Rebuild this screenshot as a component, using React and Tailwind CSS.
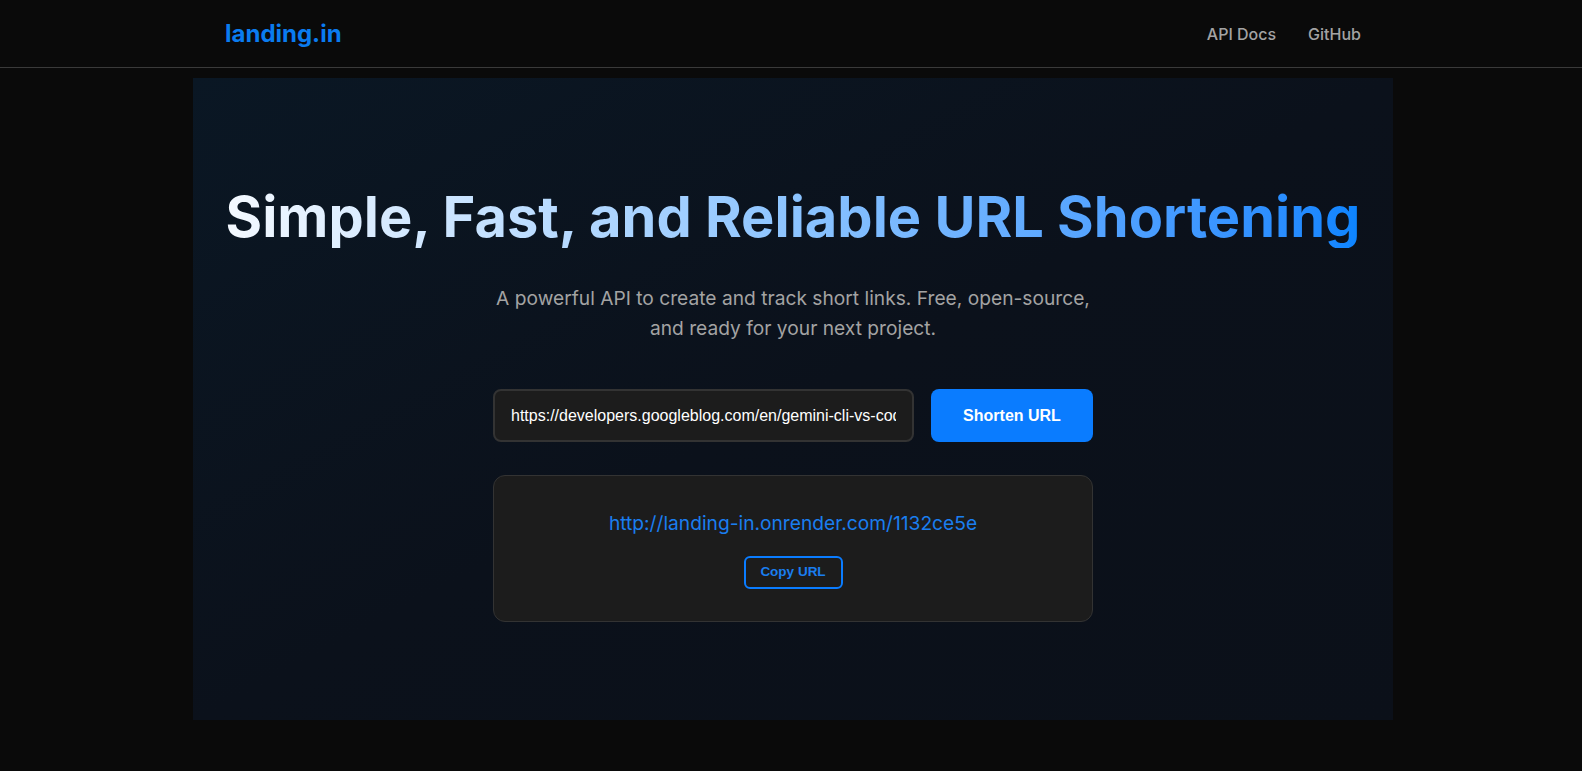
import React, { useState } from 'react';

const App = () => {
  const [url, setUrl] = useState('https://developers.googleblog.com/en/gemini-cli-vs-code-native-diffing-context-aware-workflows');
  const shortUrl = 'http://landing-in.onrender.com/1132ce5e';

  return (
    <div className="min-h-screen bg-[#0a0a0a] font-['Inter',sans-serif]">
      {/* Header */}
      <header className="border-b border-[#3a3a3a]">
        <div className="max-w-[1200px] mx-auto pl-[34px] pr-[30px] h-[67px] flex items-center justify-between">
          <a className="text-[24px] font-bold text-[#0a7cf0]">landing.in</a>
          <nav className="flex items-center gap-8 text-[16px] font-medium text-[#a3a3a3]">
            <a>API Docs</a>
            <a>GitHub</a>
          </nav>
        </div>
      </header>

      {/* Hero */}
      <main className="max-w-[1204px] mx-auto pl-1 mt-[10px]">
        <section className="bg-gradient-to-br from-[#0a1724] via-[#0b111b] to-[#0b1019] pt-[108px] pb-[98px] px-4 flex flex-col items-center text-center">
          <h1 className="text-[56px] leading-[62px] font-bold whitespace-nowrap bg-gradient-to-r from-[#f4f9ff] via-[#8cc4ff] to-[#0a84ff] bg-clip-text text-transparent">
            Simple, Fast, and Reliable URL Shortening
          </h1>
          <p className="mt-[35px] max-w-[600px] text-[19.2px] leading-[30px] text-[#a3a3a3]">
            A powerful API to create and track short links. Free, open-source, and ready for your next project.
          </p>

          <div className="mt-[46px] w-[600px] flex gap-[17px]">
            <input
              value={url}
              onChange={(e) => setUrl(e.target.value)}
              className="flex-1 min-w-0 h-[53px] px-4 bg-[#1c1c1c] border-2 border-[#333333] rounded-lg text-white text-[16px] font-['Liberation_Sans',Arial,sans-serif] outline-none"
            />
            <button className="w-[162px] h-[53px] bg-[#0a7cff] rounded-lg text-white font-bold text-[16px] font-['Liberation_Sans',Arial,sans-serif]">
              Shorten URL
            </button>
          </div>

          <div className="mt-[33px] w-[600px] h-[147px] bg-[#1c1c1c] border border-[#333333] rounded-xl flex flex-col items-center justify-center">
            <a className="text-[19.2px] leading-[29px] text-[#1a7ef0]">{shortUrl}</a>
            <button className="mt-[18px] w-[99px] h-[33px] border-2 border-[#0a7cff] rounded-md text-[#1a7ef0] font-bold text-[13.5px] font-['Liberation_Sans',Arial,sans-serif]">
              Copy URL
            </button>
          </div>
        </section>
      </main>
    </div>
  );
};

export default App;
